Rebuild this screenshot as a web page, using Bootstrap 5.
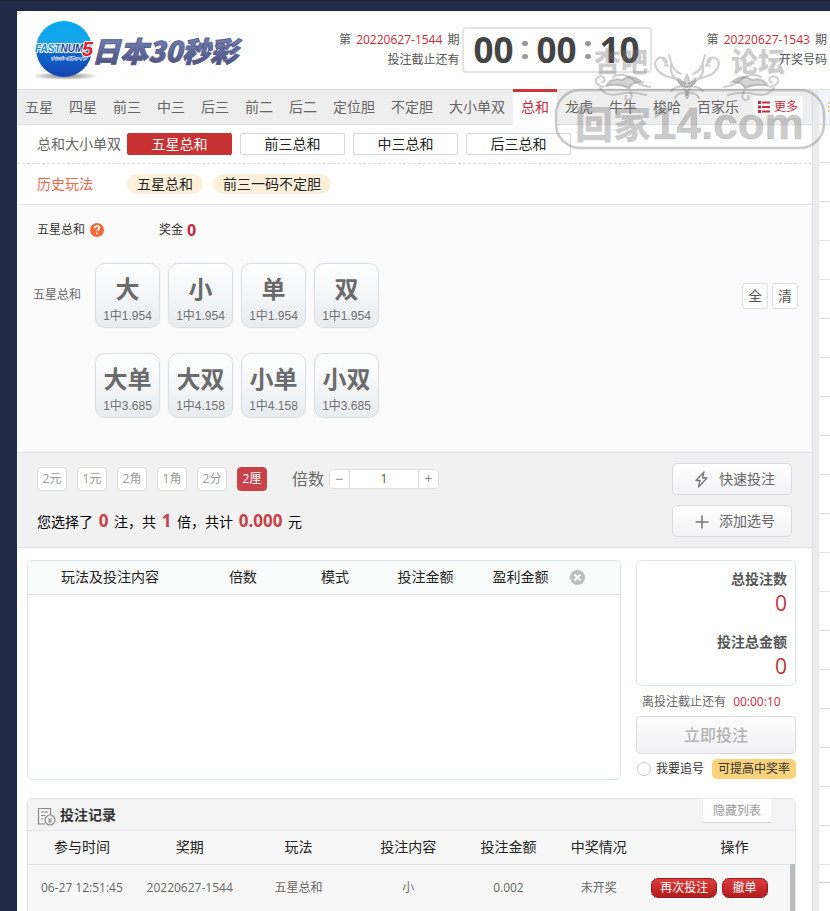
<!DOCTYPE html>
<html lang="zh-CN">
<head>
<meta charset="utf-8">
<meta name="viewport" content="width=device-width, initial-scale=1">
<title>日本30秒彩</title>
<link href="https://cdn.jsdelivr.net/npm/bootstrap@5.3.0/dist/css/bootstrap.min.css" rel="stylesheet">
<style>
body{background:#222b45;font-family:"Open Sans","Noto Sans CJK SC",sans-serif;font-size:14px;line-height:20px;color:#333;overflow-x:hidden}
button,input{font-family:inherit}
.shell{padding:10px 0 0 17px;min-height:100vh;border-top:1px solid #1d2534}
.t12{font-size:12px}
.t16{font-size:16px}
.muted{color:#666}
.red{color:#c9283e}
.top-bar{height:78px;padding:0 3px 0 18px}
.issue{line-height:20px;text-align:right;font-size:12px;color:#555}
.issue .red{margin:0 2px}
.clock{height:46px;padding:0 10px 0 9px;border:2px solid #e4e4e4;border-radius:4px;font-size:35px;font-weight:700;color:#444;line-height:42px;margin:0 55px 0 3px}
.colon{width:23px;display:flex;flex-direction:column;align-items:center;gap:8px}
.colon i{width:6px;height:5px;border-radius:3px;background:#999}
.tabs{background:#eee;border-top:1px solid #ddd;border-bottom:1px solid #ddd;height:36px;font-size:14px}
.tabs a{color:#666;padding:0 8px;line-height:34px;text-decoration:none;white-space:nowrap}
.tabs a.on{background:#fff;color:#c9283e;border-top:3px solid #d23338;line-height:30px;padding-bottom:3px;margin:-1px 0}
.tabs .more{background:#fff;border:0;color:#c9283e;border-radius:3px;height:22px;padding:0 5px;margin-left:6px;font-size:12px;gap:4px}
.gutter{width:7px;background:#ebebee;border-left:1px solid #dfdfe4}
.side{width:11px;background:#fff}
.side-tab{height:36px;background:#f2f5fb;border-top:1px solid #ddd;border-bottom:1px solid #dde3ee}
.side-list{height:758px;background:repeating-linear-gradient(#fff 0 37px,#e0e0e4 37px 38px,#fff 38px 39px);border-bottom:1px solid #ccc}
.kinds{height:39px;padding:0 20px;border-bottom:1px dashed #ddd;gap:6px}
.kinds button{width:105px;height:22px;line-height:18px;background:#fff;border:1px solid #d8d8d8;border-radius:2px;padding:0;font-size:14px;color:#222}
.kinds button.on{background:#c83232;border-color:#c83232;color:#fff}
.past{height:41px;padding:0 20px;border-bottom:1px solid #e2e5ec}
.past a{background:#fdf0da;border-radius:10px;color:#222;text-decoration:none;padding:0 10px;margin-right:10px;line-height:20px}
.past span{color:#e8694a;width:90px}
.pick{background:#fbfbfb;border-bottom:1px solid #dfe3e6;padding:15px 14px 34px 16px}
.pick-head{margin-bottom:23px}
.prize{margin-left:6px}
.pick-label{width:62px;padding-top:22px}
.rows{gap:25px}
.ball{width:65px;height:65px;border:1px solid #dcdfe1;border-radius:10px;background:linear-gradient(#fff,#e8ecef);padding:6px 0 0;color:#707070;font-size:12px;line-height:16px;box-shadow:0 0 2px #eee}
.ball b{display:block;font-size:24px;line-height:30px;margin-bottom:4px;font-weight:700;color:#6b6b6b}
.ball span{font-family:"Liberation Sans","Noto Sans CJK SC",sans-serif;display:block}
.tiny{width:26px;height:26px;padding:0;background:#fff;border:1px solid #d9e2e6;border-radius:3px;color:#555;font-size:14px;line-height:22px}
.ctl{background:#f1f1f1;border-bottom:1px solid #dfe3e6;padding:10px 20px}
.units{gap:10px;height:32px}
.units label{margin-left:15px}
.unit{width:30px;height:24px;padding:0;background:#fff;border:1px solid #ddd;border-radius:4px;color:#999;font-size:12px;line-height:20px}
.unit.on{background:#c8424a;border-color:#c8424a;color:#fff}
.step{height:20px;border:1px solid #ddd;border-radius:5px;background:#fff;overflow:hidden;margin-left:-5px}
.step button{width:19px;border:0;background:#fff;color:#888;padding:0;font-size:14px;line-height:14px}
.step input{width:70px;border:solid #ddd;border-width:0 1px;text-align:center;font-size:12px;color:#555;padding:0;min-width:0}
.acts{gap:10px}
.act{width:120px;height:32px;border:1px solid #d9dbe0;border-radius:5px;background:linear-gradient(#fff,#f3f3f6);color:#666;font-size:14px;padding:0 16px 0 20px;gap:9px}
.sum{margin-top:16px}
.sum b{color:#c8424a;font-size:17px;line-height:20px;margin:0 2px}
.orders{padding:12px 16px 0 10px;gap:15px}
.box{border:1px solid #dfe4e6;border-radius:5px;background:#fff}
.cart{min-height:220px}
table{table-layout:fixed;width:100%;text-align:center}
th{font-weight:400;color:#222}
.cart th{height:33px;background:#fafbfb;border-bottom:1px solid #dfe4e6}
.total{width:160px}
.total .box{height:126px;padding:8px 8px;text-align:right;color:#555}
.total .box b{display:block;font-size:14px}
.num{display:block;font-size:21px;line-height:28px;color:#c0343c;margin-bottom:15px}
.left-time{padding:6px 6px 4px}
.go{width:100%;height:38px;border:1px solid #dadcdf;border-radius:4px;background:linear-gradient(#fdfdfd,#f1f1f4);color:#b2b2b2;font-size:16px;font-weight:500}
.chase-row{height:20px;margin-top:5px}
.chase{width:14px;height:14px;margin:0 5px 0 1px;appearance:none;border:1px solid #ccc;border-radius:50%;background:#fff}
.tip{background:#fbd27c;border-radius:5px;padding:0 6px;line-height:20px;color:#333}
.rec{background:#f7f7f7;border-radius:5px 5px 0 0;border-bottom:0;margin:18px 16px 0 10px}
.rec-head{height:32px;background:#f3f3f3;border-bottom:1px solid #e2e4ea;padding:0 24px 0 9px}
.rec-head button{width:68px;height:24px;background:#fff;border:0;border-bottom:1px solid #d5d5d5;color:#999;padding:0;font-size:12px}
.rec th{height:33px;border-bottom:1px solid #dfe1e8}
.rec td{height:47px;border-bottom:1px solid #d8dae6;font-size:12px;color:#666}
.rec th:last-child{padding-left:34px}
.rec td:last-child{padding-left:8px;text-align:left;border-right:5px solid #bbb}
.pill{height:20px;border:1px solid #8f1f1f;border-radius:7px;background:linear-gradient(#e03c3c,#b21c1c);color:#fff;font-size:12px;line-height:16px;padding:0 8px;margin-right:1px}
.pill + .pill{padding:0 10px}
.mark-layer{position:absolute;left:554px;top:39px;width:272px;height:112px;pointer-events:none}
</style>
<script src="https://cdn.jsdelivr.net/npm/bootstrap@5.3.0/dist/js/bootstrap.bundle.min.js"></script>
</head>
<body>
<div class="shell d-flex flex-column position-relative">
  <header class="top-bar bg-white d-flex align-items-center">
    <svg width="208" height="62" viewBox="0 0 208 62" role="img" aria-label="日本30秒彩">
      <defs>
        <linearGradient id="orb" x1="0" y1="0" x2="0" y2="1"><stop offset="0" stop-color="#08a8ee"/><stop offset=".48" stop-color="#1aa4e6"/><stop offset=".52" stop-color="#0c6fd0"/><stop offset="1" stop-color="#1440b0"/></linearGradient>
        <linearGradient id="ink" x1="0" y1="0" x2="0" y2="1"><stop offset=".2" stop-color="#7482b4"/><stop offset="1" stop-color="#474876"/></linearGradient>
        <radialGradient id="shade"><stop offset="0" stop-color="#777"/><stop offset="1" stop-color="#fff"/></radialGradient>
      </defs>
      <ellipse cx="30" cy="57" rx="34" ry="4" fill="url(#shade)"/>
      <circle cx="29" cy="30" r="28" fill="url(#orb)"/>
      <g font-family="'Liberation Sans Narrow','Liberation Sans',sans-serif" font-weight="700" font-style="italic" paint-order="stroke" stroke="#fff" stroke-width="2" stroke-linejoin="round">
        <text x="0" y="33" font-size="10" fill="#1586d4">FAST<tspan fill="#143c9c">NUM</tspan></text>
        <text x="47" y="37" font-size="20" fill="#e4202a">5</text>
        <text x="16" y="41" font-size="4" fill="#143c9c" stroke-width="1" font-family="'Noto Sans CJK JP',sans-serif">ナンバーズファイブ</text>
      </g>
      <text x="57" y="43" font-family="'Noto Sans CJK SC',sans-serif" font-weight="900" font-style="italic" font-size="28" fill="url(#ink)" stroke="#58608f">日本30秒彩</text>
    </svg>
    <div class="issue ms-auto text-nowrap">第 <span class="red">20220627-1544</span> 期<br>投注截止还有</div>
    <div class="clock d-flex align-items-center"><span>00</span><span class="colon"><i></i><i></i></span><span>00</span><span class="colon"><i></i><i></i></span><span>10</span></div>
    <div class="issue text-nowrap">第 <span class="red">20220627-1543</span> 期<br>开奖号码</div>
  </header>

  <div class="d-flex flex-grow-1">
    <main class="flex-grow-1 bg-white">
      <nav class="tabs d-flex align-items-center">
        <a href="#">五星</a><a href="#">四星</a><a href="#">前三</a><a href="#">中三</a><a href="#">后三</a><a href="#">前二</a><a href="#">后二</a><a href="#">定位胆</a><a href="#">不定胆</a><a href="#">大小单双</a><a href="#" class="on">总和</a><a href="#">龙虎</a><a href="#">牛牛</a><a href="#">梭哈</a><a href="#">百家乐</a>
        <button type="button" class="more d-flex align-items-center text-nowrap"><svg width="12" height="12" viewBox="0 0 12 12" fill="#c9283e"><path d="M0 0h3v3H0zM0 4.500h3v3H0zM0 9h3v3H0zM4 .5h8v2H4zM4 5h8v2H4zM4 9.500h8v2H4z"/></svg>更多</button>
      </nav>
      <div class="kinds d-flex align-items-center">
        <span class="muted">总和大小单双</span>
        <div class="d-flex gap-2"><button type="button" class="on">五星总和</button><button type="button">前三总和</button><button type="button">中三总和</button><button type="button">后三总和</button></div>
      </div>
      <div class="past d-flex align-items-center">
        <span>历史玩法</span><a href="#">五星总和</a><a href="#">前三一码不定胆</a>
      </div>

      <section class="pick">
        <div class="pick-head d-flex align-items-center t12 ps-1">
          <span>五星总和</span>
          <svg class="ms-1 me-5" width="16" height="16" viewBox="0 0 16 16"><circle cx="8" cy="8" r="7" fill="#f4693a"/><path d="M5.700 6.300q.1-2.200 2.400-2.200 2.200 0 2.200 1.900 0 1-1.200 1.700-.9.500-.9 1.400M8.200 10.600v1.700" fill="none" stroke="#fff" stroke-width="1.700"/></svg>
          <span class="prize">奖金</span><b class="red t16 ms-1">0</b>
        </div>
        <div class="d-flex align-items-start">
          <span class="pick-label t12 muted">五星总和</span>
          <div class="d-flex flex-column rows">
            <div class="d-flex gap-2">
              <button type="button" class="ball"><b>大</b><span>1中1.954</span></button><button type="button" class="ball"><b>小</b><span>1中1.954</span></button><button type="button" class="ball"><b>单</b><span>1中1.954</span></button><button type="button" class="ball"><b>双</b><span>1中1.954</span></button>
            </div>
            <div class="d-flex gap-2">
              <button type="button" class="ball"><b>大单</b><span>1中3.685</span></button><button type="button" class="ball"><b>大双</b><span>1中4.158</span></button><button type="button" class="ball"><b>小单</b><span>1中4.158</span></button><button type="button" class="ball"><b>小双</b><span>1中3.685</span></button>
            </div>
          </div>
          <div class="ms-auto d-flex gap-1 pt-3 mt-1"><button type="button" class="tiny">全</button><button type="button" class="tiny">清</button></div>
        </div>
      </section>

      <section class="ctl d-flex justify-content-between">
        <div>
          <div class="d-flex align-items-center units">
            <button type="button" class="unit">2元</button><button type="button" class="unit">1元</button><button type="button" class="unit">2角</button><button type="button" class="unit">1角</button><button type="button" class="unit">2分</button><button type="button" class="unit on">2厘</button>
            <label for="times" class="t16 muted">倍数</label>
            <div class="step d-flex"><button type="button" aria-label="减">−</button><input id="times" type="text" value="1"><button type="button" aria-label="加">+</button></div>
          </div>
          <div class="sum text-black">您选择了 <b>0</b> 注，共 <b>1</b> 倍，共计 <b>0.000</b> 元</div>
        </div>
        <div class="d-flex flex-column acts">
          <button type="button" class="act d-flex align-items-center text-nowrap"><svg width="17" height="17" viewBox="0 0 17 17" fill="none" stroke="#777" stroke-width="1.300" stroke-linejoin="round"><path d="M11 1 3 9.500h4L5.500 16 14 7h-4.500z"/></svg>快速投注</button>
          <button type="button" class="act d-flex align-items-center text-nowrap"><svg width="17" height="17" viewBox="0 0 17 17" stroke="#777" stroke-width="1.500"><path d="M2.500 9h13M9 2.500v13"/></svg>添加选号</button>
        </div>
      </section>

      <section class="orders d-flex">
        <div class="box cart flex-grow-1 overflow-hidden">
          <table>
            <colgroup><col style="width:27.700%"><col style="width:17.200%"><col style="width:13.900%"><col style="width:16.700%"><col style="width:15.400%"><col></colgroup>
            <thead><tr><th>玩法及投注内容</th><th>倍数</th><th>模式</th><th>投注金额</th><th>盈利金额</th><th class="text-start ps-1"><button type="button" class="btn p-0 border-0 d-flex" aria-label="清空"><svg width="15" height="15" viewBox="0 0 15 15"><circle cx="7.500" cy="7.500" r="7.500" fill="#bdbdbd"/><path d="m4.500 4.500 6 6m0-6-6 6" stroke="#fff" stroke-width="2"/></svg></button></th></tr></thead>
          </table>
        </div>
        <aside class="total flex-shrink-0">
          <div class="box"><b>总投注数</b><span class="num">0</span><b>投注总金额</b><span class="num">0</span></div>
          <div class="t12 muted left-time">离投注截止还有 <span class="red ms-1">00:00:10</span></div>
          <button type="button" class="go">立即投注</button>
          <div class="d-flex align-items-center t12 chase-row text-nowrap"><input type="checkbox" id="chase" class="chase"><label for="chase">我要追号</label><span class="tip ms-auto">可提高中奖率</span></div>
        </aside>
      </section>

      <section class="box rec">
        <div class="rec-head d-flex">
          <svg class="me-1 align-self-end mb-1" width="19" height="19" viewBox="0 0 19 19" fill="none" stroke="#888" stroke-width="1.200"><path d="M8 17H1.500V1.500h12V8M4 5h7M4 8.500h4M4 12h2"/><circle cx="13" cy="13" r="5"/><path d="m11 10.500 2 2.500 2-2.500M13 13v3.500M11 13h4M11 14.800h4" stroke-width=".8"/></svg>
          <b class="align-self-center">投注记录</b>
          <button type="button" class="ms-auto">隐藏列表</button>
        </div>
        <table>
          <colgroup><col style="width:14.100%"><col style="width:14.100%"><col style="width:14.400%"><col style="width:14.300%"><col style="width:11.900%"><col style="width:11.700%"><col></colgroup>
          <thead><tr><th>参与时间</th><th>奖期</th><th>玩法</th><th>投注内容</th><th>投注金额</th><th>中奖情况</th><th>操作</th></tr></thead>
          <tbody><tr><td>06-27 12:51:45</td><td>20220627-1544</td><td>五星总和</td><td>小</td><td>0.002</td><td>未开奖</td><td class="text-nowrap"><button type="button" class="pill">再次投注</button> <button type="button" class="pill">撤单</button></td></tr></tbody>
        </table>
      </section>
    </main>
    <div class="gutter flex-shrink-0"></div>
    <aside class="side flex-shrink-0 overflow-hidden">
      <div class="side-tab d-flex justify-content-end align-items-center"><svg width="2" height="12" viewBox="0 0 2 12" stroke="#eeaa44"><path d="M0 2h2M0 6h2M0 11 2 9"/></svg></div>
      <div class="side-list"></div>
    </aside>
  </div>

  <svg class="mark-layer" viewBox="0 0 272 112" aria-hidden="true">
    <g fill="#777" fill-opacity=".38" font-weight="900">
      <text x="40" y="32" font-size="27" font-family="'Noto Sans CJK SC',sans-serif">杏吧</text>
      <text x="177" y="32" font-size="27" font-family="'Noto Sans CJK SC',sans-serif">论坛</text>
      <text x="21" y="98" font-size="38" font-family="'Noto Sans CJK SC',sans-serif">回家</text>
      <text x="98" y="99" font-size="44" font-family="'Liberation Sans',sans-serif" stroke="#777" stroke-opacity=".2">14.com</text>
    </g>
    <rect x="2" y="50" width="268" height="58" rx="24" fill="none" stroke="#777" stroke-opacity=".4" stroke-width="2.500"/>
    <g fill="none" stroke="#777" stroke-opacity=".36" stroke-width="2" stroke-linecap="round">
      <path d="M133 55q-5-16-18-18-12-3-14-13 1-8 9-6 5 3 1 8M131 43q-16-3-14-19M127 34q-8-3-10-12M114 26l-6-8M117 22l-2-7M132 47q-9-2-15 4M130 53q-7 0-9 5M96 47q-12-2-19-9-9-6-18-1M92 55q-14-4-26-1-14 3-20-6"/>
      <path d="M49 47q-9-3-7-8 4-5 8-1 2 4-2 4M76 52q4 6-1 8-5 0-3-4"/>
      <path d="M52 46q5-9 16-6 9-7 20 2-10 0-13 6-10-5-23-2z" fill="#777" fill-opacity=".3"/>
      <path d="M133 55q5-16 18-18 12-3 14-13-1-8-9-6-5 3-1 8M135 43q16-3 14-19M139 34q8-3 10-12M152 26l6-8M149 22l2-7M134 47q9-2 15 4M136 53q7 0 9 5M170 47q12-2 19-9 9-6 18-1M174 55q14-4 26-1 14 3 20-6"/>
      <path d="M217 47q9-3 7-8-4-5-8-1-2 4 2 4M190 52q-4 6 1 8 5 0 3-4"/>
      <path d="M214 46q-5-9-16-6-9-7-20 2 10 0 13 6 10-5 23-2z" fill="#777" fill-opacity=".3"/>
      <path d="M133 34q-5 7 0 14 5-7 0-14zM133 50q-4 4 0 9 4-5 0-9zM124 38q-1 7 7 9-1-7-7-9zM142 38q1 7-7 9 1-7 7-9z" fill="#777" fill-opacity=".3" stroke-width="1"/>
    </g>
  </svg>
</div>
</body>
</html>
